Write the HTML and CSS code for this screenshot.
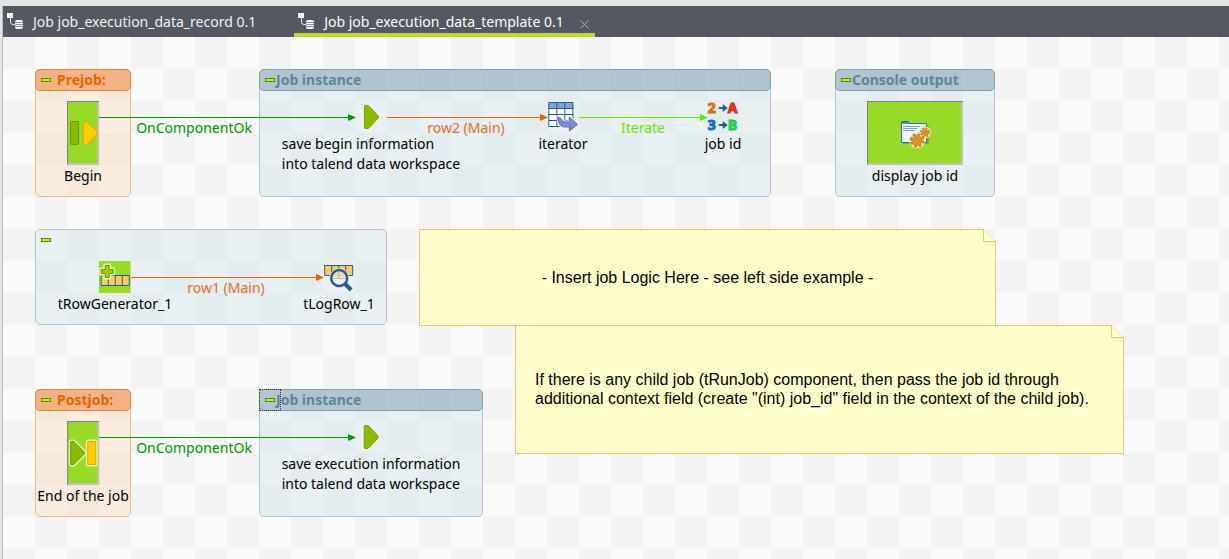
FILE: index.html
```html
<!DOCTYPE html>
<html lang="en">
<head>
<meta charset="utf-8">
<title>Job job_execution_data_template 0.1</title>
<link rel="stylesheet" href="styles.css">
</head>
<body>
<svg class="defs" aria-hidden="true">
  <symbol id="job" viewBox="0 0 17 17">
    <path fill="#fff" d="M0 0h6v5H0z"/>
    <path fill="none" stroke="#e4e5e8" d="M3.500 5v4q0 2.500 2.500 2.500h2"/>
    <rect x="8" y="7" width="8" height="9" rx="2" fill="#f5f5f6"/>
    <path stroke="#8b8e96" d="M8 9.500h8M8 11.500h8M8 13.500h8"/>
  </symbol>
  <symbol id="play" viewBox="0 0 32 32">
    <path fill="#8abb00" stroke="#f6f9f2" stroke-width="4" stroke-linejoin="round" d="M9.500 5.500q0-1 1-1h3L23.500 15v2l-10 10.500h-3q-1 0-1-1z"/>
    <path fill="#8abb00" stroke="#6fa000" d="M9.500 5.500q0-1 1-1h3L23.500 15v2l-10 10.500h-3q-1 0-1-1z"/>
  </symbol>
</svg>

<nav class="tabs" aria-label="Open jobs">
  <button class="tab"><svg class="tab-icon"><use href="#job"/></svg>Job job_execution_data_record 0.1</button>
  <div class="tab-active">
    <button class="tab"><svg class="tab-icon"><use href="#job"/></svg>Job job_execution_data_template 0.1</button>
    <button class="close" aria-label="Close tab"><svg width="9" height="9" viewBox="0 0 9 9"><path d="M.5.5l8 8M8.500.5l-8 8" stroke="#b5b8be"/></svg></button>
  </div>
</nav>

<main class="canvas">
  <section class="group warm prejob"><header><button class="toggle" aria-label="Collapse Prejob"></button><h2>Prejob:</h2></header></section>
  <section class="group instance"><header><button class="toggle" aria-label="Collapse Job instance"></button><h2>Job instance</h2></header></section>
  <section class="group console"><header><button class="toggle" aria-label="Collapse Console output"></button><h2>Console output</h2></header></section>
  <section class="group plain rows"><header><button class="toggle" aria-label="Collapse rows"></button></header></section>
  <section class="group warm postjob"><header><button class="toggle" aria-label="Collapse Postjob"></button><h2>Postjob:</h2></header></section>
  <section class="group saved"><header><button class="toggle" aria-label="Collapse Job instance"></button><h2>Job instance</h2></header><span class="focus"></span></section>

  <svg class="links" width="800" height="480" aria-hidden="true">
    <g fill="#009600" stroke="#009600"><path d="M96 80.500h250M96 400.500h250"/><path stroke="none" d="M345 77v7l8-3.500zM345 397v7l8-3.500z"/></g>
    <g fill="#e66400" stroke="#e66400"><path d="M384 80.500h154M128 240.500h186"/><path stroke="none" d="M537 77v7l8-3.500zM313 237v7l8-3.500z"/></g>
    <g fill="#64e600" stroke="#64e600"><path d="M576 80.500h122"/><path stroke="none" d="M697 77v7l8-3.500z"/></g>
  </svg>

  <span class="link ok link-begin">OnComponentOk</span>
  <span class="link flow link-row2">row2 (Main)</span>
  <span class="link iterate link-iterate">Iterate</span>
  <span class="link flow link-row1">row1 (Main)</span>
  <span class="link ok link-end">OnComponentOk</span>

  <div class="node begin">
    <div class="tile"><svg width="32" height="32" viewBox="0 0 32 32"><rect x="3.500" y="4.500" width="8" height="23" rx="1" fill="#8abb00" stroke="#6c9700"/><path d="M16.500 5.500q0-1 1-1h2L30 14.500v3L19.500 27.500h-2q-1 0-1-1z" fill="#ffcd00" stroke="#f2a000"/></svg></div>
    <span>Begin</span>
  </div>
  <div class="node save"><svg width="32" height="32"><use href="#play"/></svg><span>save begin information<br>into talend data workspace</span></div>
  <div class="node iterator">
    <svg width="32" height="32" viewBox="0 0 32 32">
      <path fill="#fff" d="M1 1h25v25H1z"/><path fill="#84a5cb" d="M1 1h25v7H1z"/>
      <path fill="none" stroke="#245d94" d="M1.500 1.500h24v24h-24zM9.500 1v25M17.500 1v25M1 7.500h25M1 13.500h25M1 19.500h25"/>
      <path fill="#8088cf" stroke="#eef2f8" stroke-width="3" stroke-linejoin="round" d="M10 16c4 0 4 5 8 5h4v-5l8 7.500-8 6.500v-4h-4c-6 0-7-5-8-10z"/>
      <path fill="#8088cf" stroke="#6268a8" stroke-linejoin="round" d="M10 16c4 0 4 5 8 5h4v-5l8 7.500-8 6.500v-4h-4c-6 0-7-5-8-10z"/>
    </svg><span>iterator</span>
  </div>
  <div class="node jobid">
    <svg width="32" height="32" viewBox="0 0 32 32" class="mapping">
      <text x="1" y="12" fill="#f08a00" stroke="#bc6b06">2</text><text x="21" y="12" fill="#fa3200" stroke="#c92f16">A</text>
      <text x="1" y="29" fill="#0086e6" stroke="#1266aa">3</text><text x="21" y="29" fill="#16f35b" stroke="#12bd4b">B</text>
      <path fill="#245d94" d="M12 6h4V3l5 4-5 4V8h-4zM12 23h4v-3l5 4-5 4v-3h-4z"/>
    </svg><span>job id</span>
  </div>
  <div class="node display">
    <div class="tile"><svg width="32" height="32" viewBox="0 0 32 32">
      <path fill="#83ae2c" d="M4 9h26v18H4z"/>
      <path fill="#4c90d7" stroke="#245d94" d="M2.500 7.500v-2q0-1 1-1h6l1.500 2v1z"/>
      <path fill="#edf8fa" stroke="#356caa" d="M2.500 6.500h25v19h-25z"/>
      <path fill="#4c90d7" d="M3 5h8v2H3z"/>
      <path stroke="#8997d2" d="M4 9.500h17M4 11.500h14M4 13.500h12"/>
      <g fill="#d8f0aa"><circle cx="18" cy="23.500" r="8"/><circle cx="26" cy="15.500" r="6"/></g>
      <g fill="#df952b"><circle cx="18" cy="23.500" r="5.500"/><circle cx="26" cy="15.500" r="3.500"/></g>
      <g fill="none" stroke="#d08020"><circle cx="18" cy="23.500" r="6" stroke-width="2.500" stroke-dasharray="2.500 2.200"/><circle cx="26" cy="15.500" r="4" stroke-width="2" stroke-dasharray="1.800 1.350"/></g>
      <g fill="#f3bc62" stroke="#c47c1e"><circle cx="18" cy="23.500" r="1.500"/><circle cx="26" cy="15.500" r="1"/></g>
    </svg></div><span>display job id</span>
  </div>
  <div class="node generator">
    <svg width="32" height="32" viewBox="0 0 32 32">
      <path fill="#98db26" d="M0 0h32v32H0z"/><path fill="#ffc860" stroke="#245d94" d="M2.500 14.500h28v10h-28zM9.500 14v11M16.500 14v11M23.500 14v11"/>
      <path fill="#8abb00" stroke="#e4f7bd" stroke-width="4" stroke-linejoin="round" d="M6.500 4.500h4v4h4v4h-4v4h-4v-4h-4v-4h4z"/>
      <path fill="#9acb18" stroke="#6a9700" stroke-linejoin="round" d="M6.500 4.500h4v4h4v4h-4v4h-4v-4h-4v-4h4z"/>
    </svg><span>tRowGenerator_1</span>
  </div>
  <div class="node log">
    <svg width="32" height="32" viewBox="0 0 32 32">
      <path fill="#ffc860" stroke="#245d94" d="M1.500 4.500h28v10h-28zM8.500 4v11M15.500 4v11M22.500 4v11"/>
      <path d="M22 22l6 6" stroke="#e7eff3" stroke-width="6"/><circle cx="16" cy="17" r="10" fill="#e7eff3"/>
      <path fill="#ffd891" d="M10 12q6-6 12 0v4H10z"/><path d="M15.500 9v9M10 17.500h12" stroke="#a7bfd4"/>
      <circle cx="16" cy="17" r="8" fill="none" stroke="#245d94" stroke-width="2.500"/><path d="M22 23l6 6" stroke="#245d94" stroke-width="4"/>
    </svg><span>tLogRow_1</span>
  </div>
  <div class="node end">
    <div class="tile"><svg width="32" height="32" viewBox="0 0 32 32">
      <g stroke="#d9f4a8" stroke-width="4" stroke-linejoin="round"><path d="M3.500 4.500h3L17 15v2L6.500 27.500h-3z"/><path d="M20.500 4.500h8v23h-8z"/></g>
      <path d="M3.500 4.500h3L17 15v2L6.500 27.500h-3z" fill="#8abb00" stroke="#6c9700"/><path d="M20.500 4.500h8v23h-8z" fill="#ffcd00" stroke="#f2a000"/>
    </svg></div><span>End of the job</span>
  </div>
  <div class="node saveend"><svg width="32" height="32"><use href="#play"/></svg><span>save execution information<br>into talend data workspace</span></div>

  <article class="note note-logic"><p>- Insert job Logic Here - see left side example -</p><svg class="fold" viewBox="0 0 13 13"><path d="M.5 0v12.500H13M.5.5l12 12"/></svg></article>
  <article class="note note-child"><p>If there is any child job (tRunJob) component, then pass the job id through<br>additional context field (create "(int) job_id" field in the context of the child job).</p><svg class="fold" viewBox="0 0 13 13"><path d="M.5 0v12.500H13M.5.5l12 12"/></svg></article>
</main>
</body>
</html>
```
FILE: styles.css
```css
* { box-sizing: border-box; }
body {
  margin: 0;
  min-height: 100vh;
  padding: 6px 0 0 2px;
  display: flex;
  flex-direction: column;
  background: #e4e4e4;
  font: 14px/20px "Noto Sans", "Open Sans", sans-serif;
  color: #000;
}
button { border: 0; padding: 0; background: none; font: inherit; color: inherit; }
svg { display: block; flex: none; }
.defs { position: absolute; width: 0; height: 0; }

.tabs {
  display: flex;
  gap: 38px;
  height: 31px;
  flex: none;
  border-left: 1px solid #bdbdbd;
  background: #545861;
  color: #f2f2f2;
  white-space: nowrap;
}
.tab { display: flex; align-items: center; gap: 9px; padding-left: 4px; }
.tab-icon { width: 17px; height: 17px; }
.tab-active { display: flex; gap: 16px; padding-right: 6px; border-bottom: 4px solid #c1d82f; color: #fff; }
.tab-active .tab { padding-top: 4px; }
.close { padding-top: 10px; }

.canvas {
  position: relative;
  flex: 1;
  min-height: 522px;
  overflow: hidden;
  border-left: 1px solid #bdbdbd;
  background: repeating-conic-gradient(#fafafa 0 25%, #f3f3f3 0 50%) 0 0 / 64px 64px;
}
.group {
  position: absolute;
  border: 1px solid #afc5d0;
  border-radius: 5px;
  background: rgba(205, 225, 235, .4);
}
.group header {
  display: flex;
  align-items: center;
  gap: 1px;
  height: 22px;
  margin: -1px;
  padding-left: 5px;
  border: 1px solid #7d9fb0;
  border-radius: 5px;
  background: rgba(125, 153, 170, .5);
}
.group h2 { margin: 0; font-size: 14px; line-height: 20px; color: #5c869c; white-space: nowrap; }
.toggle { width: 10px; height: 4px; border: 1px solid #5c8200; background: #beff00; }
.warm { border-color: #f0b684; background: rgba(250, 215, 183, .4); }
.warm header { gap: 6px; border-color: #e8843a; background: rgba(235, 125, 45, .5); }
.warm h2 { color: #e66400; }
.plain header { border-color: transparent; background: none; }
.focus { position: absolute; left: -1px; top: -1px; width: 22px; height: 22px; border: 1px dotted #333; }

.prejob { left: 32px; top: 32px; width: 96px; height: 128px; }
.instance { left: 256px; top: 32px; width: 512px; height: 128px; }
.console { left: 832px; top: 32px; width: 160px; height: 128px; }
.rows { left: 32px; top: 192px; width: 352px; height: 96px; }
.postjob { left: 32px; top: 352px; width: 96px; height: 128px; }
.saved { left: 256px; top: 352px; width: 224px; height: 128px; }

.links { position: absolute; left: 0; top: 0; }
.link { position: absolute; white-space: nowrap; transform: translateX(-50%); }
.ok { color: #009600; }
.flow { color: #ea6a28; }
.iterate { color: #64e600; }
.link-begin { left: 191px; top: 81px; }
.link-row2 { left: 463px; top: 81px; }
.link-iterate { left: 640px; top: 81px; }
.link-row1 { left: 223px; top: 241px; }
.link-end { left: 191px; top: 401px; }

.node {
  position: absolute;
  display: flex;
  flex-direction: column;
  align-items: center;
  gap: 1px;
  transform: translateX(-50%);
  white-space: nowrap;
}
.tile {
  display: flex;
  align-items: center;
  justify-content: center;
  width: 32px;
  height: 64px;
  background: #98db26;
  box-shadow: inset 1px 1px #808080, inset -2px -2px #c0c0c0;
}
.display .tile { width: 96px; }
.begin { left: 80px; top: 64px; }
.save { left: 368px; top: 64px; }
.iterator { left: 560px; top: 64px; }
.jobid { left: 720px; top: 64px; }
.display { left: 912px; top: 64px; }
.generator { left: 112px; top: 224px; }
.log { left: 336px; top: 224px; }
.end { left: 80px; top: 384px; }
.saveend { left: 368px; top: 384px; }
.mapping { overflow: visible; font: 700 14px "Open Sans", sans-serif; }

.note {
  position: absolute;
  display: flex;
  align-items: center;
  border: 1px solid #e8c46e;
  background: #ffffcb;
  clip-path: polygon(0 0, calc(100% - 13px) 0, 100% 13px, 100% 100%, 0 100%);
  font: 16px/19px "Liberation Sans", Arial, sans-serif;
  white-space: nowrap;
}
.note p { margin: 0; }
.note-logic { left: 416px; top: 192px; width: 577px; height: 97px; justify-content: center; }
.note-child { left: 512px; top: 288px; width: 609px; height: 129px; padding: 0 0 2px 19px; }
.fold { position: absolute; right: -1px; top: -1px; width: 13px; height: 13px; fill: none; stroke: #e8c46e; }
```
